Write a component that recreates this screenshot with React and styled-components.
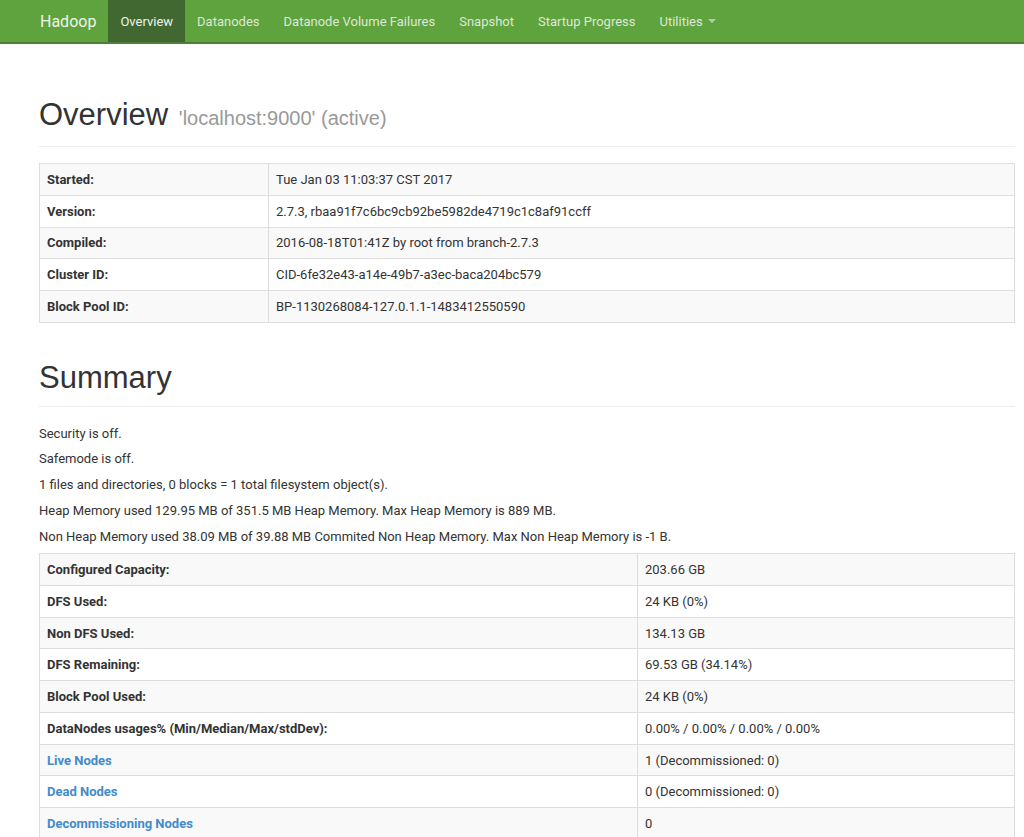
import React from 'react';
import styled, { createGlobalStyle } from 'styled-components';

const GlobalStyle = createGlobalStyle`
  body {
    margin: 0;
    background: #fff;
    color: #333;
    font-family: "Source Sans Pro", "Roboto", "Liberation Sans", sans-serif;
    font-size: 13px;
  }
`;

const Navbar = styled.nav`
  display: flex;
  align-items: stretch;
  height: 42px;
  padding-left: 40px;
  background: #5fa33e;
  border-bottom: 2px solid #4e7f38;
`;

const Brand = styled.a`
  display: flex;
  align-items: center;
  padding-right: 12px;
  font-size: 16px;
  color: #eef3ea;
  text-decoration: none;
`;

const NavItem = styled.a`
  display: flex;
  align-items: center;
  padding: 0 12px;
  color: ${(p) => (p.active ? '#eef3ea' : '#dce8d4')};
  background: ${(p) => (p.active ? '#426831' : 'transparent')};
  text-decoration: none;
  white-space: nowrap;
`;

const Caret = styled.span`
  display: inline-block;
  margin-left: 5px;
  width: 0;
  height: 0;
  border-left: 4px solid transparent;
  border-right: 4px solid transparent;
  border-top: 4px solid #b6c9aa;
  vertical-align: middle;
`;

const Container = styled.div`
  padding: 0 9px 0 39px;
`;

const PageHeader = styled.div`
  margin: ${(p) => p.top}px 0 ${(p) => p.bottom}px;
  padding-bottom: 9px;
  border-bottom: 1px solid #eee;
`;

const Title = styled.h1`
  margin: 0;
  font-family: "Liberation Sans", Arial, sans-serif;
  font-weight: 400;
  font-size: 31px;
  line-height: 38px;
  color: #333;
`;

const Small = styled.small`
  font-size: 20px;
  color: #999;
  margin-left: 2px;
`;

const Line = styled.p`
  margin: 0;
  height: 25.7px;
  line-height: 18px;
`;

const Table = styled.table`
  width: 100%;
  border-collapse: collapse;
  border: 1px solid #ddd;
  margin-bottom: 20px;
`;

const Row = styled.tr`
  height: 31.75px;
  background: ${(p) => (p.odd ? '#f9f9f9' : '#fff')};
`;

const Th = styled.th`
  width: ${(p) => p.w}px;
  text-align: left;
  font-weight: 700;
  padding: 0 7px;
  line-height: 17px;
  border: 1px solid #ddd;
  color: #333;
`;

const Td = styled.td`
  padding: 0 7px;
  line-height: 17px;
  border: 1px solid #ddd;
`;

const Link = styled.a`
  color: #428bca;
  text-decoration: none;
`;

const overview = [
  ['Started:', 'Tue Jan 03 11:03:37 CST 2017'],
  ['Version:', '2.7.3, rbaa91f7c6bc9cb92be5982de4719c1c8af91ccff'],
  ['Compiled:', '2016-08-18T01:41Z by root from branch-2.7.3'],
  ['Cluster ID:', 'CID-6fe32e43-a14e-49b7-a3ec-baca204bc579'],
  ['Block Pool ID:', 'BP-1130268084-127.0.1.1-1483412550590'],
];

const summary = [
  ['Configured Capacity:', '203.66 GB'],
  ['DFS Used:', '24 KB (0%)'],
  ['Non DFS Used:', '134.13 GB'],
  ['DFS Remaining:', '69.53 GB (34.14%)'],
  ['Block Pool Used:', '24 KB (0%)'],
  ['DataNodes usages% (Min/Median/Max/stdDev):', '0.00% / 0.00% / 0.00% / 0.00%'],
  ['Live Nodes', '1 (Decommissioned: 0)', true],
  ['Dead Nodes', '0 (Decommissioned: 0)', true],
  ['Decommissioning Nodes', '0', true],
];

const lines = [
  'Security is off.',
  'Safemode is off.',
  '1 files and directories, 0 blocks = 1 total filesystem object(s).',
  'Heap Memory used 129.95 MB of 351.5 MB Heap Memory. Max Heap Memory is 889 MB.',
  'Non Heap Memory used 38.09 MB of 39.88 MB Commited Non Heap Memory. Max Non Heap Memory is -1 B.',
];

const navItems = ['Datanodes', 'Datanode Volume Failures', 'Snapshot', 'Startup Progress'];

export default function App() {
  return (
    <>
      <GlobalStyle />
      <Navbar>
        <Brand href="#">Hadoop</Brand>
        <NavItem href="#" active>Overview</NavItem>
        {navItems.map((n) => (
          <NavItem key={n} href="#">{n}</NavItem>
        ))}
        <NavItem href="#">
          Utilities <Caret />
        </NavItem>
      </Navbar>
      <Container>
        <PageHeader top={52} bottom={16}>
          <Title>
            Overview <Small>'localhost:9000' (active)</Small>
          </Title>
        </PageHeader>
        <Table>
          <tbody>
            {overview.map(([k, v], i) => (
              <Row key={k} odd={i % 2 === 0}>
                <Th w={214}>{k}</Th>
                <Td>{v}</Td>
              </Row>
            ))}
          </tbody>
        </Table>
        <PageHeader top={36} bottom={18}>
          <Title>Summary</Title>
        </PageHeader>
        {lines.map((l) => (
          <Line key={l}>{l}</Line>
        ))}
        <Table>
          <tbody>
            {summary.map(([k, v, link], i) => (
              <Row key={k} odd={i % 2 === 0}>
                <Th w={583}>{link ? <Link href="#">{k}</Link> : k}</Th>
                <Td>{v}</Td>
              </Row>
            ))}
          </tbody>
        </Table>
      </Container>
    </>
  );
}
